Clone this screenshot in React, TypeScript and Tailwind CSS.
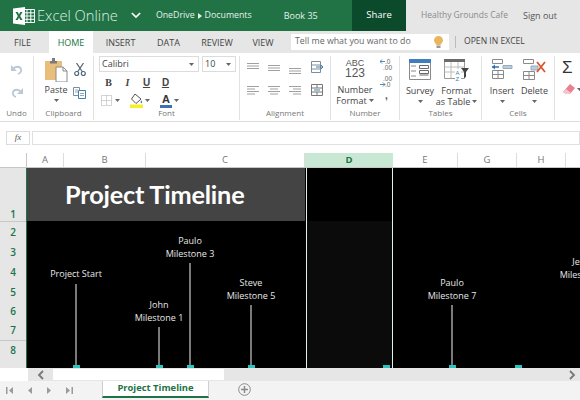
import React from "react";

const Caret = ({ className = "" }: { className?: string }) => (
  <svg width="5" height="3" viewBox="0 0 5 3" className={className}>
    <path d="M0 0h5L2.500 3z" fill="#666" />
  </svg>
);

const ExcelLogo = () => (
  <svg width="22" height="18" viewBox="0 0 22 18" className="shrink-0">
    <path d="M10 2.500h11.500v13H10z" fill="#217346" stroke="#fff" strokeWidth="1" />
    <path d="M14 2.500v13M17.800 2.500v13M10 5.800h11M10 9h11M10 12.300h11" stroke="#fff" strokeWidth="1" />
    <path d="M0 1.500 12 0v18L0 16.500z" fill="#fff" />
    <path d="M2.500 5h2.300l1.200 2.600L7.300 5h2.200L7.200 9l2.400 4.100H7.300L6 10.400l-1.300 2.700H2.500L4.800 9z" fill="#217346" />
  </svg>
);

const Undo = ({ flip = false }: { flip?: boolean }) => (
  <svg width="14" height="13" viewBox="0 0 14 13" className={flip ? "-scale-x-100" : ""}>
    <path d="M3 6c2-3 7-3 8 0 .7 2.500-1 4.500-3 5" fill="none" stroke="#b9c9d8" strokeWidth="1.800" />
    <path d="M1 2v6h6z" fill="#b9c9d8" />
  </svg>
);

const PasteIcon = () => (
  <svg width="23" height="24" viewBox="0 0 23 24">
    <path d="M0 3h17v19H0z" fill="#e9bd7a" />
    <path d="M5 3h7v2.500H5zM7 0h3v3H7z" fill="#7a7a7a" />
    <path d="M11 9h7l4 4v11H11z" fill="#fff" stroke="#8a8a8a" />
    <path d="M18 9v4h4" fill="none" stroke="#8a8a8a" />
  </svg>
);

const Scissors = () => (
  <svg width="12" height="13" viewBox="0 0 12 13" fill="none" stroke="#4f6478" strokeWidth="1.200">
    <path d="M2.500 0 8.500 9M9.500 0 3.500 9" />
    <circle cx="2.700" cy="10.500" r="2" />
    <circle cx="9.300" cy="10.500" r="2" />
  </svg>
);

const CopyIcon = () => (
  <svg width="13" height="12" viewBox="0 0 13 12" fill="#fff" stroke="#7d8d9c">
    <path d="M.5.500h6v8h-6z" />
    <path d="M5.500 3.500h7v8h-7z" stroke="#3f7fa8" />
    <path d="M2 3h3M2 5h3M7 6.500h4M7 8.500h4" strokeWidth=".8" />
  </svg>
);

const BorderIcon = () => (
  <svg width="11" height="11" viewBox="0 0 11 11" fill="none" stroke="#aaa" strokeDasharray="1 1">
    <path d="M.5.500h10v10H.5zM5.500.500v10M.5 5.500h10" />
  </svg>
);

const FillIcon = () => (
  <svg width="13" height="15" viewBox="0 0 13 15">
    <path d="M5 1 11 6 6 10.500 1.500 6z" fill="#fff" stroke="#555" />
    <path d="M11 7c1 1.500 1.500 2 1 3-.6.500-1.500 0-1.400-1z" fill="#3f7fa8" />
    <path d="M0 11.500h13V15H0z" fill="#f6f02a" />
  </svg>
);

const Lines = ({ kind }: { kind: "left" | "center" | "right" | "plain" }) => {
  const d = {
    left: "M0 .5h12M0 3h8M0 5.500h12M0 8h8",
    center: "M0 .5h12M2 3h8M0 5.500h12M2 8h8",
    right: "M0 .5h12M4 3h8M0 5.500h12M4 8h8",
    plain: "M0 .5h12M0 3h12M0 5.500h12",
  }[kind];
  return (
    <svg width="12" height="9" viewBox="0 0 12 9">
      <path d={d} stroke="#a0a0a0" strokeWidth="1" />
    </svg>
  );
};

const WrapIcon = () => (
  <svg width="13" height="12" viewBox="0 0 13 12" fill="none" stroke="#7d8d9c">
    <path d="M.5.500h9v11h-9zM.5 4h9M.5 8h9" />
    <path d="M5 6h7M10 4l2 2-2 2" stroke="#3f7fa8" />
  </svg>
);

const MergeIcon = () => (
  <svg width="12" height="12" viewBox="0 0 12 12" fill="none" stroke="#777">
    <path d="M.5.500h11v11H.5zM.5 4h11M.5 8h11M6 .500V4M6 8v3.500" />
    <path d="M3 6h6" stroke="#3f7fa8" />
  </svg>
);

const DecIcon = ({ up }: { up: boolean }) => (
  <svg width="13" height="13" viewBox="0 0 13 13" fontFamily="Liberation Sans" fontSize="6.500">
    {up ? (
      <>
        <text x="5" y="5.500" fill="#666">.0</text>
        <text x="3" y="11.500" fill="#666">.00</text>
        <path d="M0 3.500h5M0 3.500l2-2M0 3.500l2 2" stroke="#3f7fa8" strokeWidth=".9" fill="none" />
      </>
    ) : (
      <>
        <text x="3" y="5.500" fill="#666">.00</text>
        <text x="5" y="11.500" fill="#666">.0</text>
        <path d="M0 9.500h5M5 9.500l-2-2M5 9.500l-2 2" stroke="#3f7fa8" strokeWidth=".9" fill="none" />
      </>
    )}
  </svg>
);

const SurveyIcon = () => (
  <svg width="22" height="21" viewBox="0 0 22 21" fill="none" stroke="#8a8a8a">
    <path d="M.5.500h21v20H.5z" />
    <path d="M0 0h22v4H0z" fill="#3f7fc0" stroke="none" />
    <path d="M2 7h5M2 12h5M2 17h5" />
    <path d="M10.500 6.500h9v3h-9zM10.500 11.500h9v3h-9zM10.500 16h9" stroke="#6a6a6a" />
  </svg>
);

const FormatTableIcon = () => (
  <svg width="25" height="22" viewBox="0 0 25 22">
    <path d="M.5.500h20v19H.5z" fill="#fff" stroke="#9a9a9a" />
    <path d="M0 0h21v3H0z" fill="#6b6b6b" />
    <path d="M.5 8h20M.5 13h20M7 3v16M14 3v16" stroke="#bcbcbc" />
    <path d="M11 10h6v12h-6z" fill="#fff" />
    <path d="M17 9h8l-3 4v5l-2 1v-6z" fill="#444" />
    <text x="11.500" y="15.500" fontSize="6" fill="#3f7fa8" fontFamily="Liberation Sans">A</text>
    <text x="11.500" y="21.500" fontSize="6" fill="#3f7fa8" fontFamily="Liberation Sans">Z</text>
  </svg>
);

const InsertIcon = () => (
  <svg width="21" height="20" viewBox="0 0 21 20" fill="none" stroke="#8a8a8a">
    <path d="M.5.500h10v4H.5zM.5 11.500h11v8H.5zM6 11.500v8M.5 15.500h11" />
    <path d="M11 6.500h9v3h-9z" fill="#b6cfe0" stroke="#9ab" />
    <path d="M0 8h7" stroke="#2e75b6" strokeWidth="1.500" />
    <path d="M0 8l3-2.500v5z" fill="#2e75b6" stroke="none" />
  </svg>
);

const DeleteIcon = () => (
  <svg width="23" height="21" viewBox="0 0 23 21" fill="none" stroke="#8a8a8a">
    <path d="M.5.500h10v4H.5zM.5 12.500h11v8H.5zM6 12.500v8M.5 16.500h11" />
    <path d="M8 7h7v4H8z" fill="#b6cfe0" stroke="#9ab" />
    <path d="M14 3l8 10M22 3l-8 10" stroke="#d9542b" strokeWidth="1.800" />
  </svg>
);

const Eraser = () => (
  <svg width="13" height="11" viewBox="0 0 13 11">
    <path d="M8 0l5 4-5 6H4L1 8z" fill="#e8808f" />
    <path d="M1 8l3 2h4l1-1-5-4z" fill="#f4c6cd" />
  </svg>
);

const RibbonGroup = ({ label, className, children }: { label: string; className: string; children: React.ReactNode }) => (
  <div className={`flex flex-col items-stretch border-r border-[#e2e2e2] h-[64px] mt-[3px] shrink-0 ${className}`}>
    <div className="flex-1 min-h-0">{children}</div>
    <div className="text-center text-[8px] leading-[12px] text-[#777] h-[13px]">{label}</div>
  </div>
);

const BigBtn = ({ icon, lines, caret = false, className = "" }: { icon: React.ReactNode; lines: React.ReactNode[]; caret?: boolean; className?: string }) => (
  <div className={`flex flex-col items-center ${className}`}>
    <div className="h-[26px] flex items-start justify-center">{icon}</div>
    {lines.map((l, i) => (
      <div key={i} className="text-[9px] leading-[11px] text-[#444] flex items-center gap-[2px]">{l}</div>
    ))}
    {caret && <Caret className="mt-[4px]" />}
  </div>
);

const Ribbon = () => (
  <div className="h-[69px] bg-white border-b border-[#dcdcdc] flex items-start shrink-0 overflow-hidden">
    <RibbonGroup label="Undo" className="w-[34px]">
      <div className="flex flex-col items-center gap-[10px] pt-[7px]">
        <Undo />
        <Undo flip />
      </div>
    </RibbonGroup>
    <RibbonGroup label="Clipboard" className="w-[60px]">
      <div className="flex pl-[10px] gap-[5px]">
        <BigBtn icon={<PasteIcon />} lines={["Paste"]} caret className="w-[24px] pt-[2px]" />
        <div className="flex flex-col items-center gap-[11px] pt-[7px]">
          <Scissors />
          <CopyIcon />
        </div>
      </div>
    </RibbonGroup>
    <RibbonGroup label="Font" className="w-[146px]">
      <div className="pl-[5px]">
        <div className="flex gap-[3px]">
          <div className="w-[100px] h-[16px] border border-[#dcdcdc] flex items-center justify-between px-[2px] text-[9px] text-[#444]">
            Calibri <Caret className="mr-[2px]" />
          </div>
          <div className="w-[34px] h-[16px] border border-[#dcdcdc] flex items-center justify-between px-[2px] text-[9px] text-[#444]">
            10 <Caret className="mr-[2px]" />
          </div>
        </div>
        <div className="flex items-center h-[19px] mt-[1px] text-[10px] text-[#444] font-['Liberation_Serif']">
          <span className="w-[19px] text-center font-bold">B</span>
          <span className="w-[19px] text-center italic font-bold">I</span>
          <span className="w-[19px] text-center underline font-bold font-['Liberation_Sans']">U</span>
          <span className="w-[19px] text-center underline font-bold font-['Liberation_Sans']">D</span>
        </div>
        <div className="flex items-center h-[17px] pl-[2px]">
          <BorderIcon />
          <Caret className="ml-[3px]" />
          <div className="w-[10px]" />
          <FillIcon />
          <Caret className="ml-[2px]" />
          <div className="w-[10px]" />
          <div className="flex flex-col items-center w-[12px]">
            <span className="text-[11px] leading-[11px] font-bold text-[#333] font-['Liberation_Sans']">A</span>
            <span className="w-[12px] h-[3px] bg-[#3f6fb5]" />
          </div>
          <Caret className="ml-[2px]" />
        </div>
      </div>
    </RibbonGroup>
    <RibbonGroup label="Alignment" className="w-[91px]">
      <div className="pl-[7px]">
        <div className="flex h-[25px] items-start">
          <div className="w-[21px] mt-[7px]"><Lines kind="plain" /></div>
          <div className="w-[21px] mt-[9px]"><Lines kind="plain" /></div>
          <div className="w-[22px] mt-[12px]"><Lines kind="plain" /></div>
          <div className="mt-[5px]"><WrapIcon /></div>
        </div>
        <div className="flex items-center h-[14px] mt-[2px]">
          <div className="w-[21px] flex"><Lines kind="left" /></div>
          <div className="w-[21px] flex"><Lines kind="center" /></div>
          <div className="w-[22px] flex"><Lines kind="right" /></div>
          <MergeIcon />
        </div>
      </div>
    </RibbonGroup>
    <RibbonGroup label="Number" className="w-[69px]">
      <div className="flex pl-[5px]">
        <div className="flex flex-col items-center w-[38px]">
          <div className="text-[9px] leading-[10px] text-[#555] pt-[2px] font-['Liberation_Sans'] h-[12px]">ABC</div>
          <div className="text-[12px] leading-[11px] text-[#555] mb-[5px] font-['Liberation_Sans']">123</div>
          <div className="text-[9px] leading-[11px] text-[#444]">Number</div>
          <div className="text-[9px] leading-[11px] text-[#444] flex items-center gap-[2px]">Format <Caret /></div>
        </div>
        <div className="flex flex-col items-center w-[20px] pl-[5px] pt-[2px] gap-[4px]">
          <DecIcon up />
          <DecIcon up={false} />
          <span className="font-bold text-[10px] leading-[8px] text-[#555] font-['Liberation_Sans']">,</span>
        </div>
      </div>
    </RibbonGroup>
    <RibbonGroup label="Tables" className="w-[82px]">
      <div className="flex pt-[3px]">
        <BigBtn icon={<SurveyIcon />} lines={["Survey"]} caret className="w-[40px]" />
        <BigBtn icon={<FormatTableIcon />} lines={["Format", <>as Table <Caret /></>]} className="w-[33px]" />
      </div>
    </RibbonGroup>
    <RibbonGroup label="Cells" className="w-[73px]">
      <div className="flex pt-[3px] pl-[3px]">
        <BigBtn icon={<InsertIcon />} lines={["Insert"]} caret className="w-[34px]" />
        <BigBtn icon={<DeleteIcon />} lines={["Delete"]} caret className="w-[31px]" />
      </div>
    </RibbonGroup>
    <div className="pl-[7px] pt-[8px] flex flex-col gap-[9px]">
      <div className="flex items-center h-[14px] text-[17px] font-['Liberation_Sans'] text-[#333]">Σ</div>
      <div className="flex items-center gap-[2px]"><Eraser /><Caret /></div>
    </div>
  </div>
);

const columns = [
  ["A", "w-[37px]"],
  ["B", "w-[82px]"],
  ["C", "w-[159px]"],
  ["D", "w-[88px]"],
  ["E", "w-[65px]"],
  ["G", "w-[59px]"],
  ["H", "w-[49px]"],
  ["", "flex-1"],
];

const milestones = [
  { lines: ["Project Start"], cls: "left-[49px] top-[100px]" },
  { lines: ["John", "Milestone 1"], cls: "left-[132px] top-[131px]" },
  { lines: ["Paulo", "Milestone 3"], cls: "left-[163px] top-[67px]" },
  { lines: ["Steve", "Milestone 5"], cls: "left-[224px] top-[109px]" },
  { lines: ["Paulo", "Milestone 7"], cls: "left-[425px] top-[109px]" },
  { lines: ["Jessie", "Milestone 9"], cls: "left-[557px] top-[88px]" },
];

const Milestone = ({ lines, cls }: { lines: string[]; cls: string }) => (
  <div className={`absolute bottom-0 w-[80px] -ml-[40px] flex flex-col items-center ${cls}`}>
    <div className="text-[9px] leading-[12.500px] text-[#e8e8e8] text-center mb-[3px]">
      {lines.map((l) => <div key={l}>{l}</div>)}
    </div>
    <div className="w-[2px] flex-1 bg-[#7a7a7a]" />
    <div className="w-[7px] h-[3px] bg-[#2cc4c0]" />
  </div>
);

const rows = [
  ["2", "h-[21px]"],
  ["3", "h-[19px]"],
  ["4", "h-[20px]"],
  ["5", "h-[20px]"],
  ["6", "h-[19px]"],
  ["7", "h-[20px] border-b border-[#c8c8c8]"],
  ["8", "h-[19px]"],
];

const Sheet = () => (
  <div className="flex-1 min-h-0 flex flex-col overflow-hidden">
    <div className="h-[15px] flex shrink-0 bg-white border-b border-[#c6c6c6]">
      <div className="w-[27px] shrink-0 border-r border-[#c6c6c6]" />
      {columns.map(([name, w]) => (
        <div
          key={name}
          className={`${w} shrink-0 text-center text-[9.500px] leading-[14px] ${
            name === "D" ? "bg-[#c8e8d4] text-[#217346] font-bold" : "text-[#777] border-r border-[#dcdcdc]"
          } ${name === "" ? "border-r-0" : ""}`}
        >
          {name}
        </div>
      ))}
    </div>
    <div className="flex-1 min-h-0 flex">
      <div className="w-[27px] shrink-0 bg-[#e6e6e6] border-r border-[#217346] text-[#217346] font-semibold text-[10px] flex flex-col">
        <div className="h-[54px] shrink-0 border-b border-[#c8c8c8] flex items-end justify-center leading-[14px]">1</div>
        {rows.map(([n, h]) => (
          <div key={n} className={`${h} flex items-center justify-center shrink-0`}>{n}</div>
        ))}
      </div>
      <div className="flex-1 relative bg-black overflow-hidden">
        <div className="h-[53px] flex">
          <div className="w-[278px] shrink-0 bg-[#444444] flex items-center pl-[38px] text-[25.300px] font-bold text-white font-['Lato'] tracking-[-0.2px]">
            Project Timeline
          </div>
        </div>
        <div className="absolute inset-y-0 left-[279px] w-[87px] border-x border-x-[#dff3e8]">
          <div className="h-[53px]" />
          <div className="h-full bg-[#0b0b0b]" />
        </div>
        {milestones.map((m) => <Milestone key={m.cls} {...m} />)}
        <div className="absolute bottom-0 left-[356px] w-[7px] h-[3px] bg-[#2cc4c0]" />
        <div className="absolute bottom-0 left-[488px] w-[7px] h-[3px] bg-[#2cc4c0]" />
      </div>
    </div>
  </div>
);

const NavIcon = ({ d }: { d: string }) => (
  <svg width="7" height="7" viewBox="0 0 7 7"><path d={d} fill="#9a9a9a" /></svg>
);

export default function App() {
  return (
    <div className="w-[580px] h-[400px] flex flex-col overflow-hidden bg-white font-['Open_Sans',sans-serif] text-[#444] whitespace-nowrap">
      <div className="h-[31px] flex shrink-0 bg-[#e6e6e6]">
        <div className="w-[352px] bg-[#217346] flex items-center text-white pl-[13px]">
          <ExcelLogo />
          <span className="ml-[2px] text-[14.700px] font-light text-[#dcefe4]">Excel Online</span>
          <svg width="10" height="7" viewBox="0 0 12 8" className="ml-[13px]" fill="none" stroke="#fff" strokeWidth="2">
            <path d="M1 1l5 5 5-5" />
          </svg>
          <span className="ml-[15px] text-[8.800px] text-[#e4f1e9] flex items-center gap-[3px]">
            OneDrive
            <svg width="4" height="6" viewBox="0 0 4 6"><path d="M0 0l4 3-4 3z" fill="#e4f1e9" /></svg>
            Documents
          </span>
          <span className="ml-[32px] text-[9px] text-[#e4f1e9]">Book 35</span>
        </div>
        <div className="w-[54px] bg-[#0b4a2a] flex items-center justify-center text-[9.500px] text-white">Share</div>
        <div className="flex-1 flex items-center pl-[15px] text-[8.500px]">
          <span className="text-[#8a8a8a]">Healthy Grounds Cafe</span>
          <span className="ml-[15px] text-[#555] text-[9px]">Sign out</span>
        </div>
      </div>
      <div className="h-[22px] flex shrink-0 bg-[#e6e6e6] items-stretch text-[9px] text-[#444]">
        <div className="w-[49px] flex items-center justify-center pt-[2px] pr-[4px]">FILE</div>
        <div className="w-[44px] bg-white text-[#217346] flex items-center justify-center pt-[2px]">HOME</div>
        <div className="w-[55px] flex items-center justify-center pt-[2px]">INSERT</div>
        <div className="w-[41px] flex items-center justify-center pt-[2px]">DATA</div>
        <div className="w-[56px] flex items-center justify-center pt-[2px]">REVIEW</div>
        <div className="w-[36px] flex items-center justify-center pt-[2px]">VIEW</div>
        <div className="ml-[10px] mt-[3px] w-[158px] h-[16px] bg-white flex items-center justify-between pl-[4px] pr-[6px]">
          <span className="text-[8.800px] text-[#666]">Tell me what you want to do</span>
          <svg width="9" height="12" viewBox="0 0 9 12">
            <path d="M4.500 0C7 0 9 2 9 4.500 9 6.500 7 7.500 6.500 9h-4C2 7.500 0 6.500 0 4.500 0 2 2 0 4.500 0z" fill="#eab55c" />
            <path d="M2.500 9.500h4V12h-4z" fill="#999" />
          </svg>
        </div>
        <div className="ml-[6px] my-[5px] w-px bg-[#bbb]" />
        <div className="ml-[8px] flex items-center text-[8.600px] text-[#444] pb-[1px]">OPEN IN EXCEL</div>
      </div>
      <Ribbon />
      <div className="h-[31px] flex shrink-0 bg-white items-start pl-[6px] pt-[9px] gap-[2px]">
        <div className="w-[24px] h-[14px] border border-[#dcdcdc] flex items-center justify-center text-[9px] italic text-[#555] font-['Liberation_Serif']">fx</div>
        <div className="flex-1 h-[14px] border border-[#e0e0e0]" />
      </div>
      <Sheet />
      <div className="h-[13px] flex shrink-0 bg-[#e6e6e6]">
        <div className="w-[28px] bg-white" />
        <div className="w-[25px] flex items-center justify-center">
          <svg width="7" height="10" viewBox="0 0 7 10" fill="none" stroke="#777" strokeWidth="1.800"><path d="M6 1 2 5l4 4" /></svg>
        </div>
        <div className="w-[171px] h-[11px] mt-[1px] bg-white" />
        <div className="flex-1 flex items-center justify-end pr-[4px]">
          <svg width="7" height="10" viewBox="0 0 7 10" fill="none" stroke="#777" strokeWidth="1.800"><path d="M1 1l4 4-4 4" /></svg>
        </div>
      </div>
      <div className="h-[19px] shrink-0 flex bg-[#f3f3f3] items-start">
        <div className="w-[102px] h-[18px] flex items-center pl-[6px] gap-[13px]">
          <NavIcon d="M0 0h1.500v7H0zM7 0v7L3 3.500z" />
          <NavIcon d="M6 0v7L2 3.500z" />
          <NavIcon d="M1 0v7l4-3.500z" />
          <NavIcon d="M0 0v7l4-3.500zM5.500 0H7v7H5.500z" />
        </div>
        <div className="w-[107px] h-[17px] bg-white border-x border-[#cfcfcf] border-b-2 border-b-[#217346] flex items-center justify-center text-[9.400px] font-bold text-[#217346]">
          Project Timeline
        </div>
        <div className="ml-[29px] mt-[2px]">
          <svg width="13" height="13" viewBox="0 0 13 13" fill="none" stroke="#8a8a8a">
            <circle cx="6.500" cy="6.500" r="5.800" />
            <path d="M6.500 3v7M3 6.500h7" strokeWidth="1.500" />
          </svg>
        </div>
      </div>
    </div>
  );
}
